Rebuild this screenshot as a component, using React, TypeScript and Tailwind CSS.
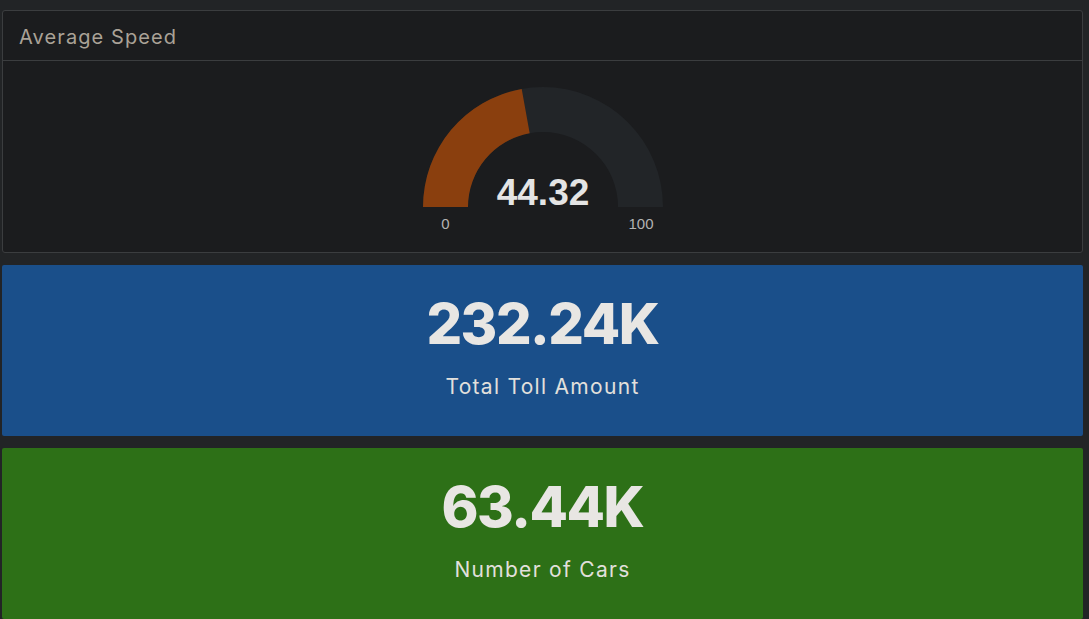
import React from "react";

function Gauge({ value, min = 0, max = 100 }: { value: number; min?: number; max?: number }) {
  const cx = 130;
  const cy = 127;
  const R = 120;
  const r = 75;
  const frac = (value - min) / (max - min);
  const a = Math.PI * (1 - frac);
  const ox = cx + R * Math.cos(a);
  const oy = cy - R * Math.sin(a);
  const ix = cx + r * Math.cos(a);
  const iy = cy - r * Math.sin(a);
  const bg = `M ${cx - R} ${cy} A ${R} ${R} 0 0 1 ${cx + R} ${cy} L ${cx + r} ${cy} A ${r} ${r} 0 0 0 ${cx - r} ${cy} Z`;
  const fg = `M ${cx - R} ${cy} A ${R} ${R} 0 0 1 ${ox} ${oy} L ${ix} ${iy} A ${r} ${r} 0 0 0 ${cx - r} ${cy} Z`;
  return (
    <svg width="260" height="160" viewBox="0 0 260 160">
      <path d={bg} fill="#222528" />
      <path d={fg} fill="#8a3f0e" />
      <text
        x={cx}
        y={125}
        textAnchor="middle"
        fill="#e4e4e4"
        style={{ fontFamily: "'Liberation Sans', Arial, sans-serif", fontWeight: 700, fontSize: 37 }}
      >
        {value.toFixed(2)}
      </text>
      <text
        x={32.5}
        y={149}
        textAnchor="middle"
        fill="#b3b3b3"
        style={{ fontFamily: "'Liberation Sans', Arial, sans-serif", fontSize: 15 }}
      >
        {min}
      </text>
      <text
        x={228}
        y={149}
        textAnchor="middle"
        fill="#b3b3b3"
        style={{ fontFamily: "'Liberation Sans', Arial, sans-serif", fontSize: 15 }}
      >
        {max}
      </text>
    </svg>
  );
}

function StatCard({ value, label, color }: { value: string; label: string; color: string }) {
  return (
    <div className={`${color} rounded-[2px] flex flex-col items-center h-[171px]`}>
      <div className="mt-[24px] text-[56px] leading-[70px] font-extrabold text-[#e8e6e3] tracking-[-1.5px]">
        {value}
      </div>
      <div className="mt-[13px] text-[21px] leading-[30px] text-[#e2e0dc] tracking-[1.3px]">{label}</div>
    </div>
  );
}

export default function App() {
  return (
    <div
      className="w-[1089px] h-[619px] overflow-hidden bg-[#222426] pl-[2px] pt-[10px]"
      style={{ fontFamily: "Inter, 'Noto Sans', sans-serif" }}
    >
      <div className="w-[1081px] flex flex-col">
        <div className="h-[243px] bg-[#1b1c1e] border border-[#3b3d3f] rounded-[3px] flex flex-col">
          <div className="h-[50px] border-b border-[#3b3d3f] flex items-center pl-[16px] pt-[3px]">
            <span className="text-[20px] text-[#aaa297] tracking-[1.1px]">Average Speed</span>
          </div>
          <div className="flex justify-center pt-[19px]">
            <Gauge value={44.32} />
          </div>
        </div>
        <div className="mt-[12px]">
          <StatCard value="232.24K" label="Total Toll Amount" color="bg-[#1a4f8a]" />
        </div>
        <div className="mt-[12px]">
          <StatCard value="63.44K" label="Number of Cars" color="bg-[#2d7017]" />
        </div>
      </div>
    </div>
  );
}
